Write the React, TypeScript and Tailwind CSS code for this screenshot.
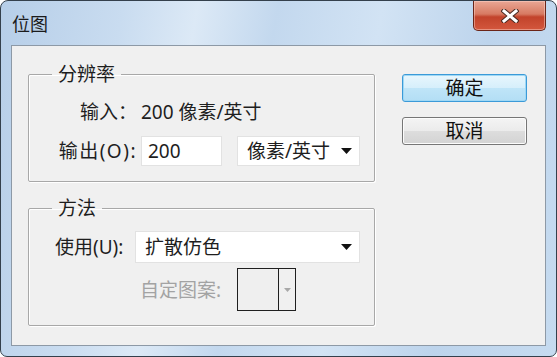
const font = { fontFamily: '"Noto Sans", "Noto Sans CJK SC", sans-serif' };

function Arrow({ color = "#111" }: { color?: string }) {
  return (
    <svg width="11" height="6" viewBox="0 0 11 6">
      <path d="M0 0 H11 L5.5 6 Z" fill={color} />
    </svg>
  );
}

function CloseButton() {
  return (
    <div className="w-[73px] h-[30px] rounded-b-[5px] border border-t-0 border-[#6b2518] bg-[linear-gradient(to_bottom,#e9a795_0%,#d77a62_45%,#c2432b_55%,#d3573d_100%)] flex items-center justify-center shadow-[inset_0_0_0_1px_rgba(255,220,210,0.45)]">
      <svg width="18" height="14" viewBox="0 0 18 14">
        <path d="M3 2 L15 12 M15 2 L3 12" stroke="#4a2a22" strokeWidth="5" strokeLinecap="square" />
        <path d="M3 2 L15 12 M15 2 L3 12" stroke="#ffffff" strokeWidth="3" strokeLinecap="square" />
      </svg>
    </div>
  );
}

function Group({ title, children }: { title: string; children: React.ReactNode }) {
  return (
    <fieldset className="m-0 p-0 border border-[#a8a8a8] rounded-[2px] shadow-[inset_1px_1px_0_#ffffff,1px_1px_0_#ffffff]">
      <legend className="ml-[23px] px-[6px] text-[19px] leading-[22px] text-[#1e1e1e]">{title}</legend>
      {children}
    </fieldset>
  );
}

export default function App() {
  return (
    <div className="w-[557px] h-[357px] bg-white" style={font}>
      <div className="h-full flex flex-col rounded-t-[8px] rounded-b-[7px] border border-[#34404c] px-[10px] pb-[10px] bg-[linear-gradient(100deg,#b6cee8_0%,#c9dcf0_20%,#dce9f6_32%,#c3d8ee_45%,#d2e3f4_62%,#bdd4ec_80%,#c6dbf0_100%)]">
        {/* Title bar */}
        <div className="h-[44px] flex items-start justify-between">
          <span className="pt-[12px] pl-[1px] text-[18px] leading-[22px] text-[#1b1b1b]">位图</span>
          <CloseButton />
        </div>

        {/* Client area */}
        <div className="flex-1 border border-[#8d99a6] bg-[#f0f0f0] flex pl-[16px] pt-[17px] text-[19px] text-[#1e1e1e]">
          <div className="w-[347px] flex flex-col gap-[15px]">
            <Group title="分辨率">
              <div className="grid grid-cols-[108px_auto] gap-x-[4px] gap-y-[9px] items-center pt-[12px] pb-[15px]">
                <span className="text-right leading-[30px]">输入：</span>
                <span className="leading-[30px]">200 像素/英寸</span>
                <span className="text-right leading-[30px] tracking-[1.5px] whitespace-nowrap">输出(O):</span>
                <div className="flex items-center gap-[15px]">
                  <div className="w-[81px] h-[30px] bg-white border border-[#e2e2e2] pl-[6px] leading-[28px]">200</div>
                  <div className="w-[123px] h-[30px] bg-white border border-[#e2e2e2] pl-[9px] pr-[7px] flex items-center justify-between">
                    <span className="leading-[28px]">像素/英寸</span>
                    <Arrow />
                  </div>
                </div>
              </div>
            </Group>

            <Group title="方法">
              <div className="flex flex-col gap-[5px] pt-[12px] pb-[14px]">
                <div className="flex items-center gap-[6px] pl-[26px]">
                  <span className="w-[74px] leading-[32px] whitespace-nowrap">使用(U):</span>
                  <div className="w-[225px] h-[32px] bg-white border border-[#e2e2e2] pl-[9px] pr-[7px] flex items-center justify-between">
                    <span className="leading-[30px]">扩散仿色</span>
                    <Arrow />
                  </div>
                </div>
                <div className="flex items-center gap-[4px] pl-[111px]">
                  <span className="w-[93px] text-[#a3a3a3] leading-[24px] whitespace-nowrap">自定图案:</span>
                  <div className="w-[59px] h-[43px] border border-[#1f1f1f] flex">
                    <div className="w-[40px] h-full bg-[#efefef]" />
                    <div className="flex-1 border-l border-[#1f1f1f] flex items-center justify-center">
                      <svg width="7" height="4" viewBox="0 0 7 4">
                        <path d="M0 0 H7 L3.5 4 Z" fill="#a8a8a8" />
                      </svg>
                    </div>
                  </div>
                </div>
              </div>
            </Group>
          </div>

          <div className="ml-[27px] w-[125px] flex flex-col gap-[15px] pt-[11px]">
            <button className="h-[28px] rounded-[3px] border border-[#3b9ad8] bg-[linear-gradient(to_bottom,#e8f6fd_0%,#d6effb_50%,#bfe5f8_51%,#b3def5_100%)] shadow-[inset_0_0_0_1px_#9fd8f5] text-[19px] leading-[26px] text-[#111]">
              确定
            </button>
            <button className="h-[28px] rounded-[3px] border border-[#767676] bg-[linear-gradient(to_bottom,#f4f4f4_0%,#ebebeb_50%,#dddddd_51%,#d3d3d3_100%)] shadow-[inset_0_0_0_1px_#fcfcfc] text-[19px] leading-[26px] text-[#111]">
              取消
            </button>
          </div>
        </div>
      </div>
    </div>
  );
}
